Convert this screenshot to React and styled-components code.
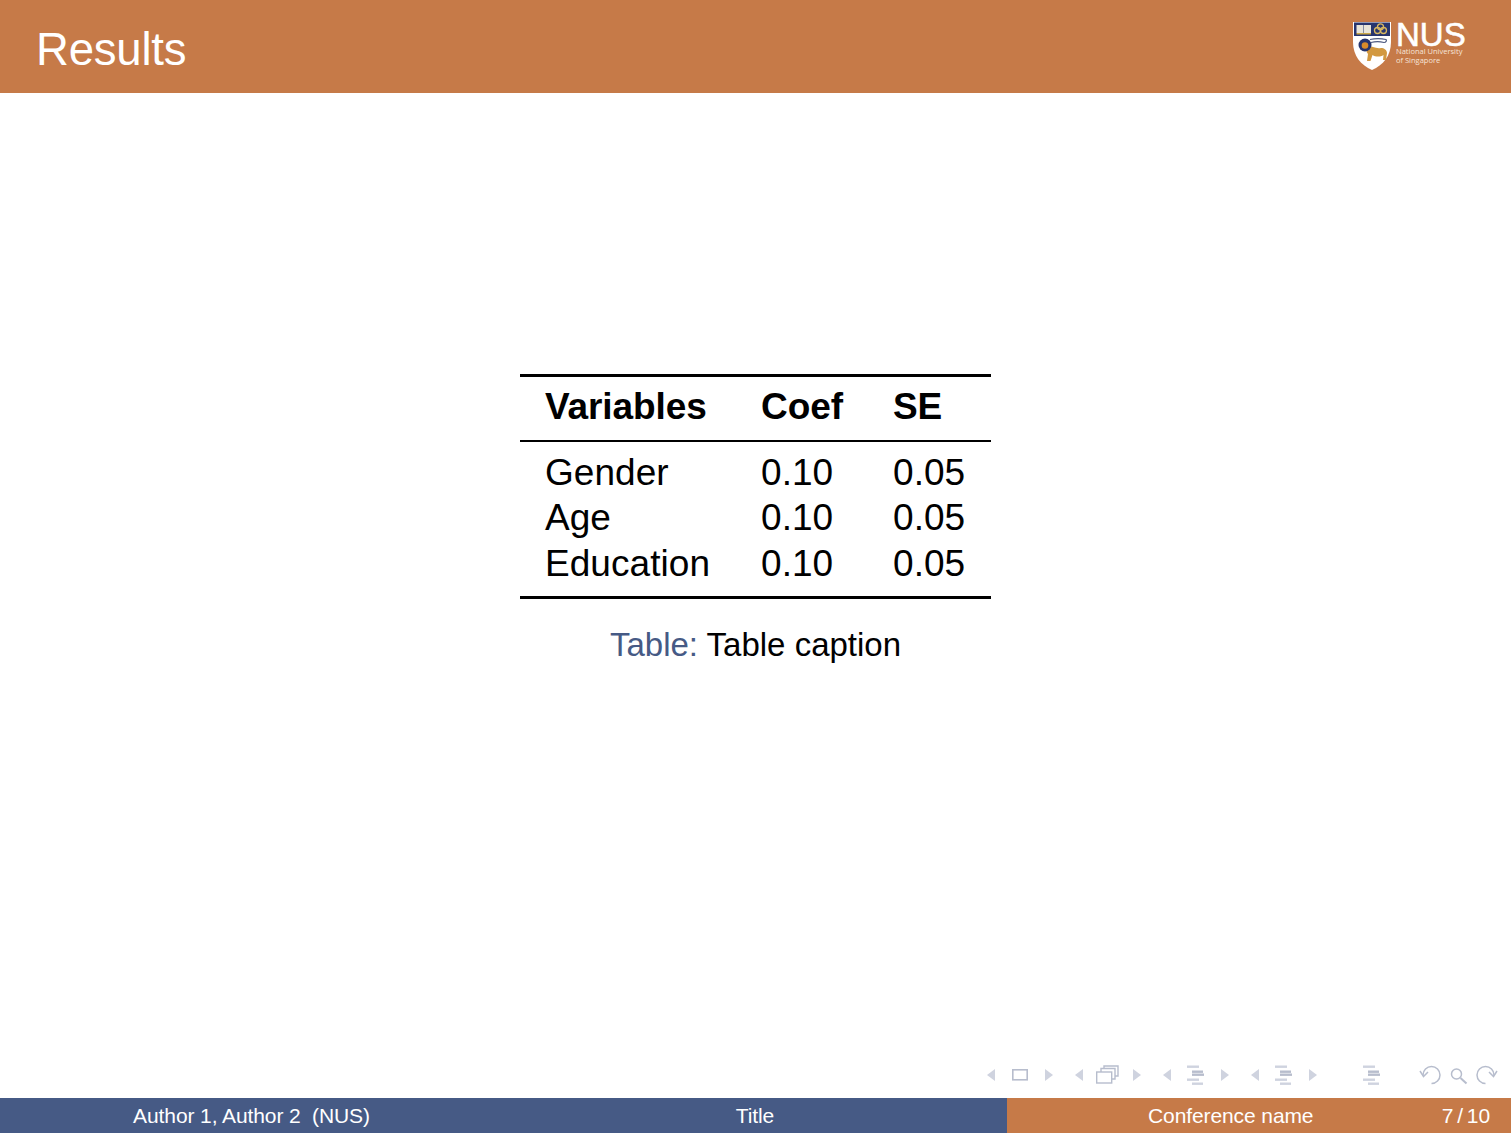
import React from "react";
import styled, { createGlobalStyle } from "styled-components";

const ORANGE = "#c67a48";
const BLUE = "#465a85";
const NAV = "#cfd3df";
const NAV_DARK = "#b7bdcd";

const rows = [
  ["Gender", "0.10", "0.05"],
  ["Age", "0.10", "0.05"],
  ["Education", "0.10", "0.05"],
];

const GlobalStyle = createGlobalStyle`
  html, body {
    margin: 0;
    padding: 0;
    background: #fff;
    font-family: "Liberation Sans", Arial, sans-serif;
  }
`;

const Slide = styled.div`
  display: flex;
  flex-direction: column;
  width: 1511px;
  height: 1133px;
  overflow: hidden;
`;

const Header = styled.header`
  display: flex;
  flex: none;
  align-items: center;
  justify-content: space-between;
  height: 93px;
  padding: 0 46px 0 36px;
  box-sizing: border-box;
  background: ${ORANGE};
`;

const Title = styled.h1`
  margin: 0;
  padding-top: 6px;
  color: #fff;
  font-size: 45.5px;
  font-weight: 400;
  line-height: 52px;
  letter-spacing: -0.2px;
`;

const Logo = styled.div`
  display: flex;
  align-items: flex-start;
  gap: 5px;
  height: 50px;
  margin-top: -1px;
`;

const LogoText = styled.div`
  display: flex;
  flex-direction: column;
  width: 69px;
  color: #fff;
`;

const LogoName = styled.span`
  height: 26px;
  font-size: 33px;
  line-height: 27px;
  -webkit-text-stroke: 0.6px #fff;
`;

const LogoSub = styled.span`
  color: #f6e4d8;
  font-size: 7.5px;
  line-height: 9px;
  white-space: nowrap;
  font-family: "Open Sans", "Liberation Sans", sans-serif;
`;

const Main = styled.main`
  display: flex;
  flex: 1;
  flex-direction: column;
  align-items: center;
  padding-top: 281px;
`;

const Table = styled.table`
  width: 471px;
  border-collapse: collapse;
  border-top: 3px solid #000;
  border-bottom: 3px solid #000;
  color: #000;
  font-size: 37px;
  table-layout: fixed;
`;

const HeadCell = styled.th`
  height: 65px;
  padding: 0 0 2px 25px;
  border-bottom: 2px solid #000;
  text-align: left;
  font-weight: 700;
  letter-spacing: -0.08px;
  box-sizing: border-box;
  width: ${({ $width }) => $width}px;
`;

const Cell = styled.td`
  height: 45.5px;
  padding: 0 0 0 25px;
  line-height: 44px;
  box-sizing: border-box;
  letter-spacing: 0.05px;
`;

const SpacerRow = styled.tr`
  height: ${({ $height }) => $height}px;
`;

const Caption = styled.p`
  margin: 23px 0 0;
  color: #000;
  font-size: 33px;
  line-height: 46px;
`;

const CaptionLabel = styled.span`
  color: ${BLUE};
`;

const NavBar = styled.nav`
  display: flex;
  flex: none;
  align-items: center;
  justify-content: flex-end;
  height: 26px;
  padding-right: 13px;
  margin-bottom: 10px;
`;

const NavGroup = styled.div`
  display: flex;
  align-items: center;
  gap: ${({ $gap }) => $gap || 0}px;
  margin-left: ${({ $left }) => $left || 0}px;
`;

const Footer = styled.footer`
  display: grid;
  flex: none;
  grid-template-columns: 503px 504px 504px;
  height: 35px;
  color: #fff;
  font-size: 21px;
  line-height: 36px;
  letter-spacing: -0.1px;
`;

const FooterCell = styled.div`
  display: flex;
  align-items: center;
  justify-content: center;
  background: ${({ $accent }) => ($accent ? ORANGE : BLUE)};
  white-space: pre;
`;

const ConferenceCell = styled(FooterCell)`
  justify-content: space-between;
  padding: 0 21px 0 141px;
`;

const PageNumber = styled.span`
  word-spacing: -1.8px;
`;

const Arrow = ({ dir }) => (
  <svg width="10" height="14" viewBox="0 0 10 14">
    <path d={dir === "left" ? "M9 1v12L1 7z" : "M1 1v12l8-6z"} fill={NAV} />
  </svg>
);

const Frame = () => (
  <svg width="16" height="14" viewBox="0 0 16 14" fill="none">
    <rect x="0.800" y="1.800" width="14.400" height="10" stroke={NAV_DARK} strokeWidth="1.600" />
  </svg>
);

const Frames = () => (
  <svg width="24" height="20" viewBox="0 0 24 20" fill="none" stroke={NAV_DARK} strokeWidth="1.400">
    <path d="M8 3.500V1h14v10h-3" />
    <path d="M5 7V3.500h14V14h-3" />
    <rect x="0.700" y="7" width="15" height="11" fill="#fff" />
  </svg>
);

const lineRows = [
  [1, 12, 1.5, NAV],
  [6, 11, 6.5, NAV_DARK],
  [6, 12, 9.5, NAV_DARK],
  [1, 12, 14.5, NAV],
  [6, 11, 18.5, NAV],
];

const Lines = () => (
  <svg width="20" height="22" viewBox="0 0 20 22">
    {lineRows.map(([x, w, y, fill]) => (
      <rect key={y} x={x} y={y} width={w} height="2.400" fill={fill} />
    ))}
  </svg>
);

const NavSection = ({ gap, icon }) => (
  <NavGroup $gap={gap}>
    <Arrow dir="left" />
    {icon}
    <Arrow dir="right" />
  </NavGroup>
);

const SearchGroup = () => (
  <NavGroup $left={37} $gap={6}>
    <svg width="24" height="20" viewBox="0 0 24 20" fill="none" stroke={NAV_DARK} strokeWidth="1.500">
      <path d="M4 10a8.500 8.500 0 1 1 8.500 8.500" />
      <path d="M1 6l3.500 5.500L9 7" />
    </svg>
    <svg width="19" height="20" viewBox="0 0 19 20" fill="none" stroke={NAV_DARK} strokeWidth="1.500">
      <circle cx="7.500" cy="9" r="5" />
      <path d="M11.500 13l6 5.500" strokeWidth="2" />
    </svg>
    <svg width="24" height="20" viewBox="0 0 24 20" fill="none" stroke={NAV_DARK} strokeWidth="1.500">
      <path d="M20 10a8.500 8.500 0 1 0-8.500 8.500" />
      <path d="M23 6l-3.500 5.500L15 7" />
    </svg>
  </NavGroup>
);

const Crest = () => (
  <svg width="38" height="50" viewBox="0 0 38 50">
    <path d="M0 1h38v20c0 14-8 23-19 28C8 44 0 35 0 21z" fill="#fff" />
    <path d="M1 1.500h36V15H1z" fill="#27356e" />
    <rect x="3.500" y="4" width="7" height="8" fill="#e8e4d8" />
    <rect x="11" y="4" width="7" height="8" fill="#e8e4d8" />
    <path d="M3.500 12h14.500v1.500H3.500z" fill="#c9a647" />
    <g fill="none" stroke="#d9b860" strokeWidth="1.300">
      <circle cx="27.500" cy="5.800" r="3" />
      <circle cx="24.500" cy="9.500" r="3" />
      <circle cx="30.500" cy="9.500" r="3" />
    </g>
    <path d="M14 25c5 0 9 3 14 2 3 0 6 2 6 5l-1 7h-3l.5-5c-3 2-8 2-11 0l-2 6h-3.500l1-7c-2-2-2-5-1-8z" fill="#d2983f" />
    <circle cx="12" cy="24" r="6.500" fill="#27356e" />
    <circle cx="12" cy="24.500" r="3.300" fill="#d98b2b" />
    <path d="M17 18.500c5-1 11-1 16 0 1 1 0 3-2 3-4-1-9-1-13 0" fill="none" stroke="#4f5b80" strokeWidth="1.200" />
  </svg>
);

const App = () => (
  <Slide>
    <GlobalStyle />
    <Header>
      <Title>Results</Title>
      <Logo>
        <Crest />
        <LogoText>
          <LogoName>NUS</LogoName>
          <LogoSub>National University</LogoSub>
          <LogoSub>of Singapore</LogoSub>
        </LogoText>
      </Logo>
    </Header>
    <Main>
      <Table>
        <thead>
          <tr>
            <HeadCell $width={216}>Variables</HeadCell>
            <HeadCell $width={132}>Coef</HeadCell>
            <HeadCell $width={123}>SE</HeadCell>
          </tr>
        </thead>
        <tbody>
          <SpacerRow $height={9.7} />
          {rows.map((row) => (
            <tr key={row[0]}>
              {row.map((value, i) => (
                <Cell key={i}>{value}</Cell>
              ))}
            </tr>
          ))}
          <SpacerRow $height={11.3} />
        </tbody>
      </Table>
      <Caption>
        <CaptionLabel>Table:</CaptionLabel> Table caption
      </Caption>
    </Main>
    <NavBar>
      <NavGroup $gap={20}>
        <NavSection gap={16} icon={<Frame />} />
        <NavSection gap={12} icon={<Frames />} />
        <NavSection gap={14} icon={<Lines />} />
        <NavSection gap={14} icon={<Lines />} />
      </NavGroup>
      <NavGroup $left={44}>
        <Lines />
      </NavGroup>
      <SearchGroup />
    </NavBar>
    <Footer>
      <FooterCell>Author 1, Author 2  (NUS)</FooterCell>
      <FooterCell>Title</FooterCell>
      <ConferenceCell $accent>
        <span>Conference name</span>
        <PageNumber>7 / 10</PageNumber>
      </ConferenceCell>
    </Footer>
  </Slide>
);

export default App;
